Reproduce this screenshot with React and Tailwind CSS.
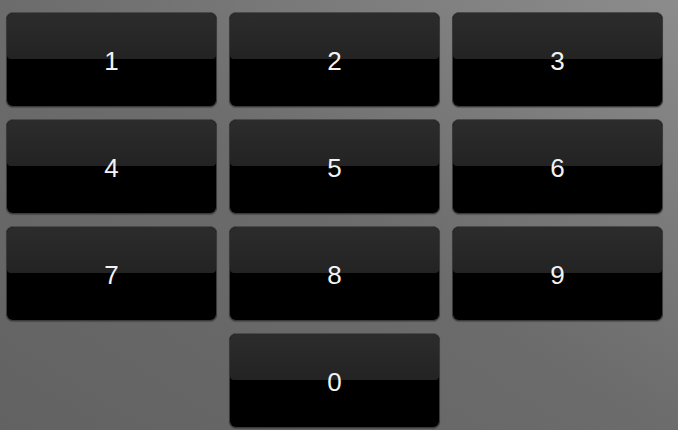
import React from "react";

const keys = ["1", "2", "3", "4", "5", "6", "7", "8", "9"];

const Key = ({ label }) => (
  <button className="relative w-[211px] h-[95px] rounded-[7px] bg-black border border-[#3a3a3a] border-t-[#4a4a4a] overflow-hidden shadow-[0_1px_1px_rgba(0,0,0,0.25)]">
    <div className="absolute left-0 right-0 top-0 h-[46px] bg-gradient-to-b from-[#2c2c2c] to-[#232323] rounded-b-[4px]" />
    <span className="relative block pt-[4px] text-[26px] text-[#f2f2f2] font-['Liberation_Sans',Arial,sans-serif]">
      {label}
    </span>
  </button>
);

export default function App() {
  return (
    <div className="w-[678px] h-[430px] overflow-hidden bg-gradient-to-bl from-[#8c8c8c] via-[#6c6c6c] to-[#626262] pl-[6px] pt-[12px]">
      <div className="grid grid-cols-[211px_211px_211px] gap-x-[12px] gap-y-[12px]">
        {keys.map((k) => (
          <Key key={k} label={k} />
        ))}
        <div />
        <Key label="0" />
      </div>
    </div>
  );
}
